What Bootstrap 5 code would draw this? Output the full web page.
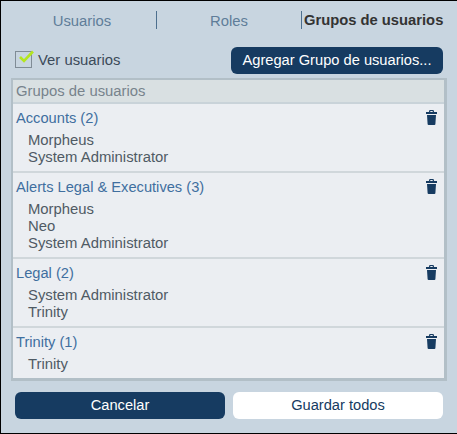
<!DOCTYPE html>
<html lang="es">
<head>
<meta charset="utf-8">
<title>Grupos de usuarios</title>
<link rel="stylesheet" href="https://cdn.jsdelivr.net/npm/bootstrap@5.3.0/dist/css/bootstrap.min.css">
<style>
html,body{height:434px;overflow:hidden}
body{font-family:"Liberation Sans",Arial,sans-serif;font-size:14.85px;line-height:17px;background:#c8d5e0;color:#4a5560}
.shell{width:457px;height:434px;border:1px solid #000;border-width:1px 0 1px 1px;padding:0 10px 0 10px}
.tabbar{height:38px;padding-top:10px}
.tabcell{height:18px;line-height:20px;text-align:center;color:#5f7d99}
.tc1{width:146px;border-right:1px solid #4d6f8e;padding-right:3px}
.tc2{width:145px;border-right:1px solid #4d6f8e}
.tc3{flex:1;color:#333;font-weight:700;font-size:14.75px;text-align:left;padding-left:2px;white-space:nowrap;line-height:18px}
.toolrow{height:39px;padding:8px 4px 0 4px}
.tick{width:17px;height:17px;border:1px solid #808c96;position:relative;flex:none}
.tick svg{position:absolute;left:2px;top:-3px}
.lbl{margin-left:6px;color:#3b4a59;position:relative;top:1px}
.navy{background:#163b61;color:#fff;border:0;border-radius:6px;height:27px;padding:0;font-size:14.67px;line-height:27px}
.navy:hover,.pale:hover{background:#163b61;color:#fff}
.addbtn{width:212px}
.panel{height:303px;border:2px solid #b2bfc7;border-width:2px 3px 3px 2px;background:#ebeef2;margin-top:0}
.phead{height:24px;background:#d9e0e2;border-bottom:2px solid #c9d3d9;padding:3px 0 0 3px;color:#77838c;line-height:17px}
.grp{border-bottom:2px solid #d0d7db;padding:6px 0 0 3px;position:relative}
.grp:last-child{border-bottom:0}
.g1{height:69px}.g2{height:86px}.g3{height:69px}
.gname{color:#3f6f9f;font-size:14.67px;height:17px;margin-bottom:5px}
.gmem{padding-left:12px;color:#4f5a64;line-height:17px}
.bin{position:absolute;right:7px;top:6px;display:block}
.foot{padding:11px 4px 0 4px;gap:8px}
.pale{background:#fff;color:#163b61;border:0;border-radius:6px;height:27px;padding:0;font-size:14.67px;line-height:27px}
.w210{width:210px}
</style>
</head>
<body>
<div class="shell">
  <div class="tabbar d-flex">
    <div class="tabcell tc1">Usuarios</div>
    <div class="tabcell tc2">Roles</div>
    <div class="tabcell tc3">Grupos de usuarios</div>
  </div>
  <div class="toolrow d-flex justify-content-between align-items-start">
    <div class="d-flex align-items-center pt-1">
      <span class="tick"><svg width="17" height="15" viewBox="0 0 17 15"><path d="M2 8l4 4 9-9.5" fill="none" stroke="#b4e61e" stroke-width="2.6"/></svg></span>
      <span class="lbl">Ver usuarios</span>
    </div>
    <button type="button" class="btn navy addbtn">Agregar Grupo de usuarios...</button>
  </div>
  <div class="panel">
    <div class="phead">Grupos de usuarios</div>
    <div class="grp g1">
      <div class="gname">Accounts (2)</div>
      <div class="gmem">Morpheus<br>System Administrator</div>
      <svg class="bin" width="11" height="15" viewBox="0 0 11 15"><path fill="#163b61" d="M3.5 0h4l.6 2H11v2H0V2h2.9zM4.4 1l-.2 1h2.6l-.2-1zM1 5h9l-.6 9a1 1 0 0 1-1 1H2.6a1 1 0 0 1-1-1z"/></svg>
    </div>
    <div class="grp g2">
      <div class="gname">Alerts Legal &amp; Executives (3)</div>
      <div class="gmem">Morpheus<br>Neo<br>System Administrator</div>
      <svg class="bin" width="11" height="15" viewBox="0 0 11 15"><path fill="#163b61" d="M3.5 0h4l.6 2H11v2H0V2h2.9zM4.4 1l-.2 1h2.6l-.2-1zM1 5h9l-.6 9a1 1 0 0 1-1 1H2.6a1 1 0 0 1-1-1z"/></svg>
    </div>
    <div class="grp g3">
      <div class="gname">Legal (2)</div>
      <div class="gmem">System Administrator<br>Trinity</div>
      <svg class="bin" width="11" height="15" viewBox="0 0 11 15"><path fill="#163b61" d="M3.5 0h4l.6 2H11v2H0V2h2.9zM4.4 1l-.2 1h2.6l-.2-1zM1 5h9l-.6 9a1 1 0 0 1-1 1H2.6a1 1 0 0 1-1-1z"/></svg>
    </div>
    <div class="grp">
      <div class="gname">Trinity (1)</div>
      <div class="gmem">Trinity</div>
      <svg class="bin" width="11" height="15" viewBox="0 0 11 15"><path fill="#163b61" d="M3.5 0h4l.6 2H11v2H0V2h2.9zM4.4 1l-.2 1h2.6l-.2-1zM1 5h9l-.6 9a1 1 0 0 1-1 1H2.6a1 1 0 0 1-1-1z"/></svg>
    </div>
  </div>
  <div class="foot d-flex">
    <button type="button" class="btn navy w210">Cancelar</button>
    <button type="button" class="btn pale w210">Guardar todos</button>
  </div>
</div>
<script src="https://cdn.jsdelivr.net/npm/bootstrap@5.3.0/dist/js/bootstrap.bundle.min.js"></script>
</body>
</html>
